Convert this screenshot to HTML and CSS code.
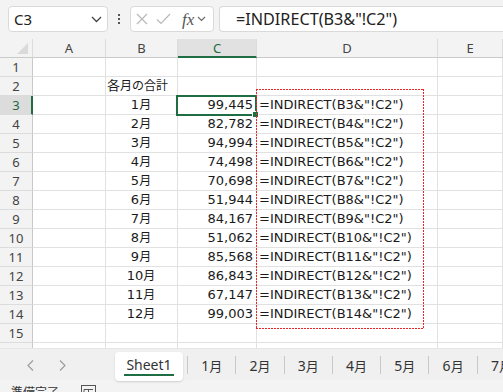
FILE: index.html
```html
<!DOCTYPE html>
<html lang="ja">
<head>
<meta charset="utf-8">
<link rel="stylesheet" href="styles.css">
</head>
<body>
<div class="app">
  <div class="fbar">
    <div class="namebox">
      <span class="nb-text">C3</span>
      <svg class="nb-chev" width="11" height="7" viewBox="0 0 11 7"><path d="M1 1 L5.5 5.5 L10 1" fill="none" stroke="#444" stroke-width="1.3"/></svg>
    </div>
    <div class="more"><i></i><i></i><i></i></div>
    <div class="fxbox">
      <svg width="12" height="12" viewBox="0 0 12 12"><path d="M1 1 L11 11 M11 1 L1 11" stroke="#b8b8b8" stroke-width="1.2"/></svg>
      <svg width="15" height="12" viewBox="0 0 15 12"><path d="M1 6.5 L5 10.5 L14 1" fill="none" stroke="#b8b8b8" stroke-width="1.2"/></svg>
      <span class="fx">fx</span>
      <svg width="9" height="6" viewBox="0 0 9 6"><path d="M1 1 L4.5 4.5 L8 1" fill="none" stroke="#666" stroke-width="1.1"/></svg>
    </div>
    <div class="formula">=INDIRECT(B3&amp;"!C2")</div>
  </div>

  <div class="sheet">
    <div class="row head">
      <div class="h corner"><i class="tri"></i></div>
      <div class="a">A</div><div class="b">B</div><div class="c curc">C</div><div class="d">D</div><div class="e">E</div>
    </div>
    <div class="row"><div class="h">1</div><div class="a"></div><div class="b"></div><div class="c"></div><div class="d"></div><div class="e"></div></div>
    <div class="row"><div class="h">2</div><div class="a"></div><div class="b left">各<span class="j">月の合計</span></div><div class="c"></div><div class="d"></div><div class="e"></div></div>
    <div class="row"><div class="h cur">3</div><div class="a"></div><div class="b">1<span class="j">月</span></div><div class="c">99,445</div><div class="d">=INDIRECT(B3&amp;"!C2")</div><div class="e"></div></div>
    <div class="row"><div class="h">4</div><div class="a"></div><div class="b">2<span class="j">月</span></div><div class="c">82,782</div><div class="d">=INDIRECT(B4&amp;"!C2")</div><div class="e"></div></div>
    <div class="row"><div class="h">5</div><div class="a"></div><div class="b">3<span class="j">月</span></div><div class="c">94,994</div><div class="d">=INDIRECT(B5&amp;"!C2")</div><div class="e"></div></div>
    <div class="row"><div class="h">6</div><div class="a"></div><div class="b">4<span class="j">月</span></div><div class="c">74,498</div><div class="d">=INDIRECT(B6&amp;"!C2")</div><div class="e"></div></div>
    <div class="row"><div class="h">7</div><div class="a"></div><div class="b">5<span class="j">月</span></div><div class="c">70,698</div><div class="d">=INDIRECT(B7&amp;"!C2")</div><div class="e"></div></div>
    <div class="row"><div class="h">8</div><div class="a"></div><div class="b">6<span class="j">月</span></div><div class="c">51,944</div><div class="d">=INDIRECT(B8&amp;"!C2")</div><div class="e"></div></div>
    <div class="row"><div class="h">9</div><div class="a"></div><div class="b">7<span class="j">月</span></div><div class="c">84,167</div><div class="d">=INDIRECT(B9&amp;"!C2")</div><div class="e"></div></div>
    <div class="row"><div class="h">10</div><div class="a"></div><div class="b">8<span class="j">月</span></div><div class="c">51,062</div><div class="d">=INDIRECT(B10&amp;"!C2")</div><div class="e"></div></div>
    <div class="row"><div class="h">11</div><div class="a"></div><div class="b">9<span class="j">月</span></div><div class="c">85,568</div><div class="d">=INDIRECT(B11&amp;"!C2")</div><div class="e"></div></div>
    <div class="row"><div class="h">12</div><div class="a"></div><div class="b">10<span class="j">月</span></div><div class="c">86,843</div><div class="d">=INDIRECT(B12&amp;"!C2")</div><div class="e"></div></div>
    <div class="row"><div class="h">13</div><div class="a"></div><div class="b">11<span class="j">月</span></div><div class="c">67,147</div><div class="d">=INDIRECT(B13&amp;"!C2")</div><div class="e"></div></div>
    <div class="row"><div class="h">14</div><div class="a"></div><div class="b">12<span class="j">月</span></div><div class="c">99,003</div><div class="d">=INDIRECT(B14&amp;"!C2")</div><div class="e"></div></div>
    <div class="row"><div class="h">15</div><div class="a"></div><div class="b"></div><div class="c"></div><div class="d"></div><div class="e"></div></div>
    <div class="row"><div class="h"></div><div class="a"></div><div class="b"></div><div class="c"></div><div class="d"></div><div class="e"></div></div>

    <div class="sel"><i class="handle"></i></div>
    <div class="marquee"></div>
  </div>

  <div class="tabbar">
    <div class="nav">
      <svg width="7" height="11" viewBox="0 0 7 11"><path d="M6 0.5 L1 5.5 L6 10.5" fill="none" stroke="#9a9a9a" stroke-width="1.1"/></svg>
      <svg width="7" height="11" viewBox="0 0 7 11"><path d="M1 0.5 L6 5.5 L1 10.5" fill="none" stroke="#9a9a9a" stroke-width="1.1"/></svg>
    </div>
    <div class="tab active"><span>Sheet1</span></div>
    <div class="tab">1<span class="jt">月</span></div>
    <div class="tab">2<span class="jt">月</span></div>
    <div class="tab">3<span class="jt">月</span></div>
    <div class="tab">4<span class="jt">月</span></div>
    <div class="tab">5<span class="jt">月</span></div>
    <div class="tab">6<span class="jt">月</span></div>
    <div class="tab">7<span class="jt">月</span></div>
  </div>

  <div class="status">
    <span class="st-text">準備完了</span>
    <svg class="st-icon" width="15" height="14" viewBox="0 0 15 14"><rect x="0.5" y="0.5" width="14" height="13" fill="none" stroke="#555"/><path d="M3 4.5 H12 M3 4.5 V13 M7.5 4.5 V13" stroke="#555"/></svg>
  </div>
</div>
</body>
</html>
```

FILE: styles.css
```css
html, body {
  margin: 0;
  padding: 0;
  background: #f3f3f3;
}
.app {
  width: 503px;
  height: 392px;
  overflow: hidden;
  display: flex;
  flex-direction: column;
  font-family: "Noto Sans", "Noto Sans CJK JP", sans-serif;
}

/* formula bar */
.fbar {
  height: 39px;
  flex: none;
  display: flex;
  align-items: flex-start;
  padding: 6px 0 0 8px;
  box-sizing: border-box;
  background: #f3f3f3;
}
.namebox {
  width: 100px;
  height: 26px;
  flex: none;
  box-sizing: border-box;
  background: #fff;
  border: 1px solid #d9d9d9;
  border-radius: 4px;
  display: flex;
  align-items: center;
  justify-content: space-between;
  padding: 0 5px 0 5px;
}
.nb-text {
  font-size: 15px;
  color: #222;
}
.more {
  width: 22px;
  height: 26px;
  flex: none;
  display: flex;
  flex-direction: column;
  align-items: center;
  justify-content: center;
  gap: 2px;
}
.more i {
  width: 2px;
  height: 2px;
  background: #555;
}
.fxbox {
  width: 84px;
  height: 26px;
  flex: none;
  box-sizing: border-box;
  background: #fff;
  border: 1px solid #d9d9d9;
  border-radius: 4px;
  display: flex;
  align-items: center;
  padding: 0 0 0 5px;
  gap: 8px;
}
.fx {
  font-family: "Liberation Serif", serif;
  font-style: italic;
  font-size: 17px;
  color: #555;
  margin-left: 3px;
  margin-right: -5px;
  line-height: 1;
}
.formula {
  flex: 1;
  height: 26px;
  margin-left: 5px;
  box-sizing: border-box;
  background: #fff;
  border: 1px solid #d9d9d9;
  border-right: none;
  border-radius: 4px 0 0 4px;
  font-size: 16.2px;
  line-height: 24px;
  padding-left: 16px;
  color: #222;
  white-space: nowrap;
}

/* sheet grid */
.sheet {
  position: relative;
  height: 309px;
  flex: none;
  overflow: hidden;
  background: #fff;
}
.row {
  display: flex;
  height: 19px;
}
.row > div {
  box-sizing: border-box;
  height: 19px;
  border-right: 1px solid #e1e1e1;
  border-bottom: 1px solid #e1e1e1;
  font-family: "DejaVu Sans", "Noto Sans CJK JP", sans-serif;
  font-size: 13px;
  line-height: 18px;
  color: #1a1a1a;
  white-space: nowrap;
  flex: none;
}
.j {
  font-size: 12px;
}
.row > .h {
  width: 33px;
  background: #f3f3f3;
  border-right-color: #c9c9c9;
  border-bottom-color: #dcdcdc;
  text-align: center;
  font-family: "Noto Sans", sans-serif;
  font-size: 13px;
  color: #444;
}
.row > .h.cur {
  background: #dcdcdc;
  color: #1d6b40;
  border-right: 2px solid #1f6e43;
  padding-left: 1px;
}
.row > .a { width: 73px; }
.row > .b { width: 72px; text-align: center; padding-right: 1px; }
.row > .b.left { text-align: left; padding-left: 1px; }
.row > .c { width: 79px; text-align: right; padding-right: 3px; }
.row > .d { width: 181px; padding-left: 2px; overflow: visible; }
.row > .e { flex: 1; }

.row.head > div {
  background: #f3f3f3;
  border-right-color: #dcdcdc;
  border-bottom-color: #c9c9c9;
  font-family: "Noto Sans", sans-serif;
  color: #444;
  text-align: center;
  padding: 0;
}
.row.head > .curc {
  background: #e1e1e1;
  color: #1d6b40;
  border-bottom: 2px solid #1f6e43;
}
.corner {
  position: relative;
}
.tri {
  position: absolute;
  right: 4px;
  bottom: 3px;
  width: 0;
  height: 0;
  border-left: 11px solid transparent;
  border-bottom: 11px solid #dadada;
}

.sel {
  position: absolute;
  left: 176px;
  top: 56px;
  width: 81px;
  height: 21px;
  box-sizing: border-box;
  border: 2px solid #1f6e43;
}
.handle {
  position: absolute;
  right: -4px;
  bottom: -4px;
  width: 5px;
  height: 5px;
  background: #1f6e43;
  border: 1px solid #fff;
}
.marquee {
  position: absolute;
  left: 256px;
  top: 50px;
  width: 168px;
  height: 240px;
  background:
    repeating-linear-gradient(90deg, #e8282b 0 2px, transparent 2px 3px) top left / 100% 1px no-repeat,
    repeating-linear-gradient(90deg, #e8282b 0 2px, transparent 2px 3px) bottom left / 100% 1px no-repeat,
    repeating-linear-gradient(180deg, #e8282b 0 2px, transparent 2px 3px) top left / 1px 100% no-repeat,
    repeating-linear-gradient(180deg, #e8282b 0 2px, transparent 2px 3px) top right / 1px 100% no-repeat;
}

/* tab bar */
.tabbar {
  height: 32px;
  flex: none;
  background: #f0f0f0;
  border-top: 1px solid #e6e6e6;
  box-sizing: border-box;
  display: flex;
  align-items: flex-start;
  padding-top: 4px;
  font-family: "Noto Sans", "Noto Sans CJK JP", sans-serif;
  font-size: 14px;
  color: #333;
  white-space: nowrap;
}
.nav {
  width: 115px;
  height: 24px;
  flex: none;
  display: flex;
  align-items: center;
  padding-left: 27px;
  gap: 25px;
  box-sizing: border-box;
}
.tab {
  width: 48.3px;
  flex: none;
  display: flex;
  align-items: center;
  justify-content: center;
  position: relative;
  border-left: 1px solid #c8c8c8;
  box-sizing: border-box;
  margin-top: 3px;
  height: 18px;
}
.tab.active {
  width: 68px;
  height: 29px;
  margin-top: -1px;
  margin-right: 4px;
  border-left: none;
  background: #fff;
  border-radius: 4px;
  box-shadow: 0 1px 2px rgba(0,0,0,0.15);
  padding-bottom: 2px;
}
.tab.active span {
  border-bottom: 2px solid #1f6e43;
  padding: 0 2px 1px;
  line-height: 17px;
}
.jt {
  font-size: 13px;
}

.status {
  height: 24px;
  flex: none;
  background: #f3f3f3;
  display: flex;
  align-items: flex-start;
  padding: 3px 0 0 11px;
  box-sizing: border-box;
  font-family: "Noto Sans CJK JP", sans-serif;
  font-size: 12px;
  color: #333;
  gap: 22px;
}
.st-icon {
  margin-top: 2px;
}
```
